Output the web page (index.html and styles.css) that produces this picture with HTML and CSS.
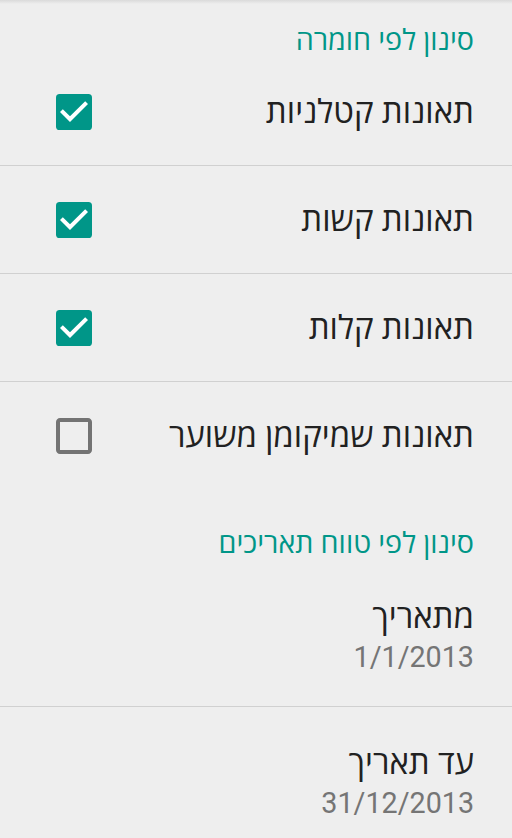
FILE: index.html
```html
<!DOCTYPE html>
<html lang="he" dir="rtl">
<head>
<meta charset="utf-8">
<link rel="stylesheet" href="styles.css">
</head>
<body>
<div class="screen">
  <div class="cat">סינון לפי חומרה</div>
  <div class="row">
    <span class="title">תאונות קטלניות</span>
    <svg class="cb" viewBox="3 3 18 18" width="36" height="36"><rect x="3" y="3" width="18" height="18" rx="1.8" fill="#009688"/><path d="M10 17l-5-5 1.41-1.41L10 14.17l7.59-7.59L19 8l-9 9z" fill="#ffffff"/></svg>
  </div>
  <div class="row">
    <span class="title">תאונות קשות</span>
    <svg class="cb" viewBox="3 3 18 18" width="36" height="36"><rect x="3" y="3" width="18" height="18" rx="1.8" fill="#009688"/><path d="M10 17l-5-5 1.41-1.41L10 14.17l7.59-7.59L19 8l-9 9z" fill="#ffffff"/></svg>
  </div>
  <div class="row">
    <span class="title">תאונות קלות</span>
    <svg class="cb" viewBox="3 3 18 18" width="36" height="36"><rect x="3" y="3" width="18" height="18" rx="1.8" fill="#009688"/><path d="M10 17l-5-5 1.41-1.41L10 14.17l7.59-7.59L19 8l-9 9z" fill="#ffffff"/></svg>
  </div>
  <div class="row last">
    <span class="title">תאונות שמיקומן משוער</span>
    <svg class="cb" viewBox="3 3 18 18" width="36" height="36"><path d="M19 5v14H5V5h14m0-2H5c-1.1 0-2 .9-2 2v14c0 1.1.9 2 2 2h14c1.1 0 2-.9 2-2V5c0-1.1-.9-2-2-2z" fill="#737373"/></svg>
  </div>
  <div class="cat cat2">סינון לפי טווח תאריכים</div>
  <div class="item">
    <div class="title">מתאריך</div>
    <div class="summary">1/1/2013</div>
  </div>
  <div class="item last">
    <div class="title">עד תאריך</div>
    <div class="summary">31/12/2013</div>
  </div>
</div>
</body>
</html>
```

FILE: styles.css
```css
html, body {
  margin: 0;
  padding: 0;
}
body {
  background-color: #eeeeee;
  background-image: linear-gradient(to bottom, #dadada 0, #eeeeee 4px);
  background-repeat: no-repeat;
  font-family: Roboto, "Open Sans", "DejaVu Sans", sans-serif;
  direction: rtl;
  overflow: hidden;
  height: 838px;
}
.screen {
  display: flex;
  flex-direction: column;
}
.cat {
  color: #009688;
  font-size: 28.7px;
  line-height: 36px;
  padding: 22px 38px 0 38px;
}
.cat2 {
  padding-top: 36px;
}
.row {
  display: flex;
  align-items: center;
  justify-content: space-between;
  height: 107px;
  padding: 0 38px 0 56px;
  border-bottom: 1px solid #d0d0d0;
}
.row.last {
  border-bottom: none;
}
.title {
  color: #212121;
  font-size: 33px;
  line-height: 40px;
}
.cb {
  display: block;
  flex: none;
}
.item {
  padding: 36px 38px 29px 38px;
  border-bottom: 1px solid #d0d0d0;
}
.item.last {
  border-bottom: none;
}
.summary {
  color: #757575;
  font-size: 28.7px;
  line-height: 40px;
}
```
